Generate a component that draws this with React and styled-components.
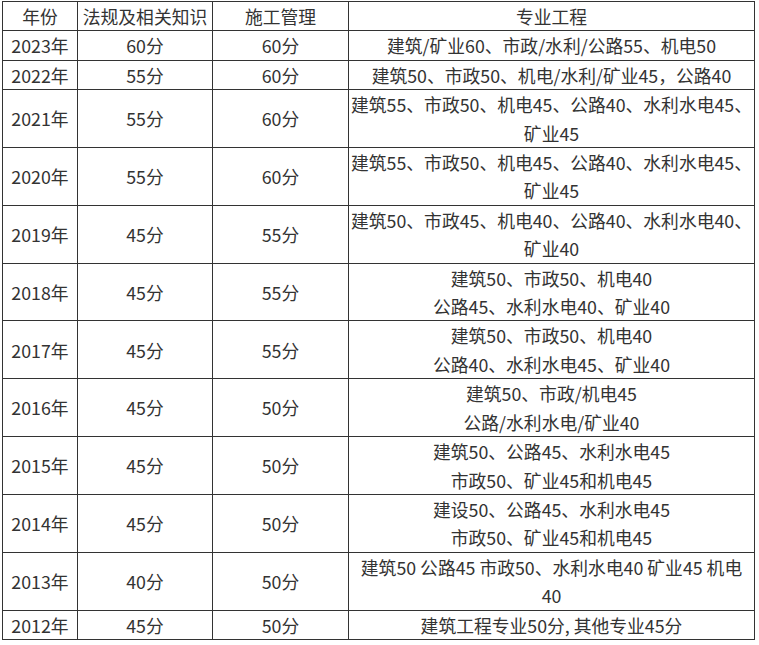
import React from 'react';
import styled, { createGlobalStyle } from 'styled-components';

const GlobalStyle = createGlobalStyle`
  html, body {
    margin: 0;
    padding: 0;
    background: #fff;
  }
  body {
    font-family: "Noto Sans CJK SC", "Microsoft YaHei", sans-serif;
    color: #333;
  }
`;

const Wrapper = styled.div`
  padding: 1px 0 0 2px;
`;

const Table = styled.table`
  border-collapse: collapse;
  table-layout: fixed;
  width: 752px;
  font-size: 17.8px;
  line-height: 28.4px;
`;

const Cell = styled.td`
  border: 1px solid #333;
  padding: 0 2px;
  text-align: center;
  vertical-align: middle;
  white-space: nowrap;
`;

const HeadCell = styled(Cell).attrs({ as: 'th' })`
  font-weight: normal;
`;

const rows = [
  ['2023年', '60分', '60分', ['建筑/矿业60、市政/水利/公路55、机电50']],
  ['2022年', '55分', '60分', ['建筑50、市政50、机电/水利/矿业45，公路40']],
  ['2021年', '55分', '60分', ['建筑55、市政50、机电45、公路40、水利水电45、', '矿业45']],
  ['2020年', '55分', '60分', ['建筑55、市政50、机电45、公路40、水利水电45、', '矿业45']],
  ['2019年', '45分', '55分', ['建筑50、市政45、机电40、公路40、水利水电40、', '矿业40']],
  ['2018年', '45分', '55分', ['建筑50、市政50、机电40', '公路45、水利水电40、矿业40']],
  ['2017年', '45分', '55分', ['建筑50、市政50、机电40', '公路40、水利水电45、矿业40']],
  ['2016年', '45分', '50分', ['建筑50、市政/机电45', '公路/水利水电/矿业40']],
  ['2015年', '45分', '50分', ['建筑50、公路45、水利水电45', '市政50、矿业45和机电45']],
  ['2014年', '45分', '50分', ['建设50、公路45、水利水电45', '市政50、矿业45和机电45']],
  ['2013年', '40分', '50分', ['建筑50 公路45 市政50、水利水电40 矿业45 机电', '40']],
  ['2012年', '45分', '50分', ['建筑工程专业50分, 其他专业45分']],
];

export default function App() {
  return (
    <Wrapper>
      <GlobalStyle />
      <Table>
        <colgroup>
          <col style={{ width: 75 }} />
          <col style={{ width: 135 }} />
          <col style={{ width: 136 }} />
          <col style={{ width: 406 }} />
        </colgroup>
        <thead>
          <tr>
            <HeadCell>年份</HeadCell>
            <HeadCell>法规及相关知识</HeadCell>
            <HeadCell>施工管理</HeadCell>
            <HeadCell>专业工程</HeadCell>
          </tr>
        </thead>
        <tbody>
          {rows.map(([year, law, mgmt, spec]) => (
            <tr key={year}>
              <Cell>{year}</Cell>
              <Cell>{law}</Cell>
              <Cell>{mgmt}</Cell>
              <Cell>
                {spec.map((line, idx) => (
                  <React.Fragment key={idx}>
                    {idx > 0 && <br />}
                    {line}
                  </React.Fragment>
                ))}
              </Cell>
            </tr>
          ))}
        </tbody>
      </Table>
    </Wrapper>
  );
}
